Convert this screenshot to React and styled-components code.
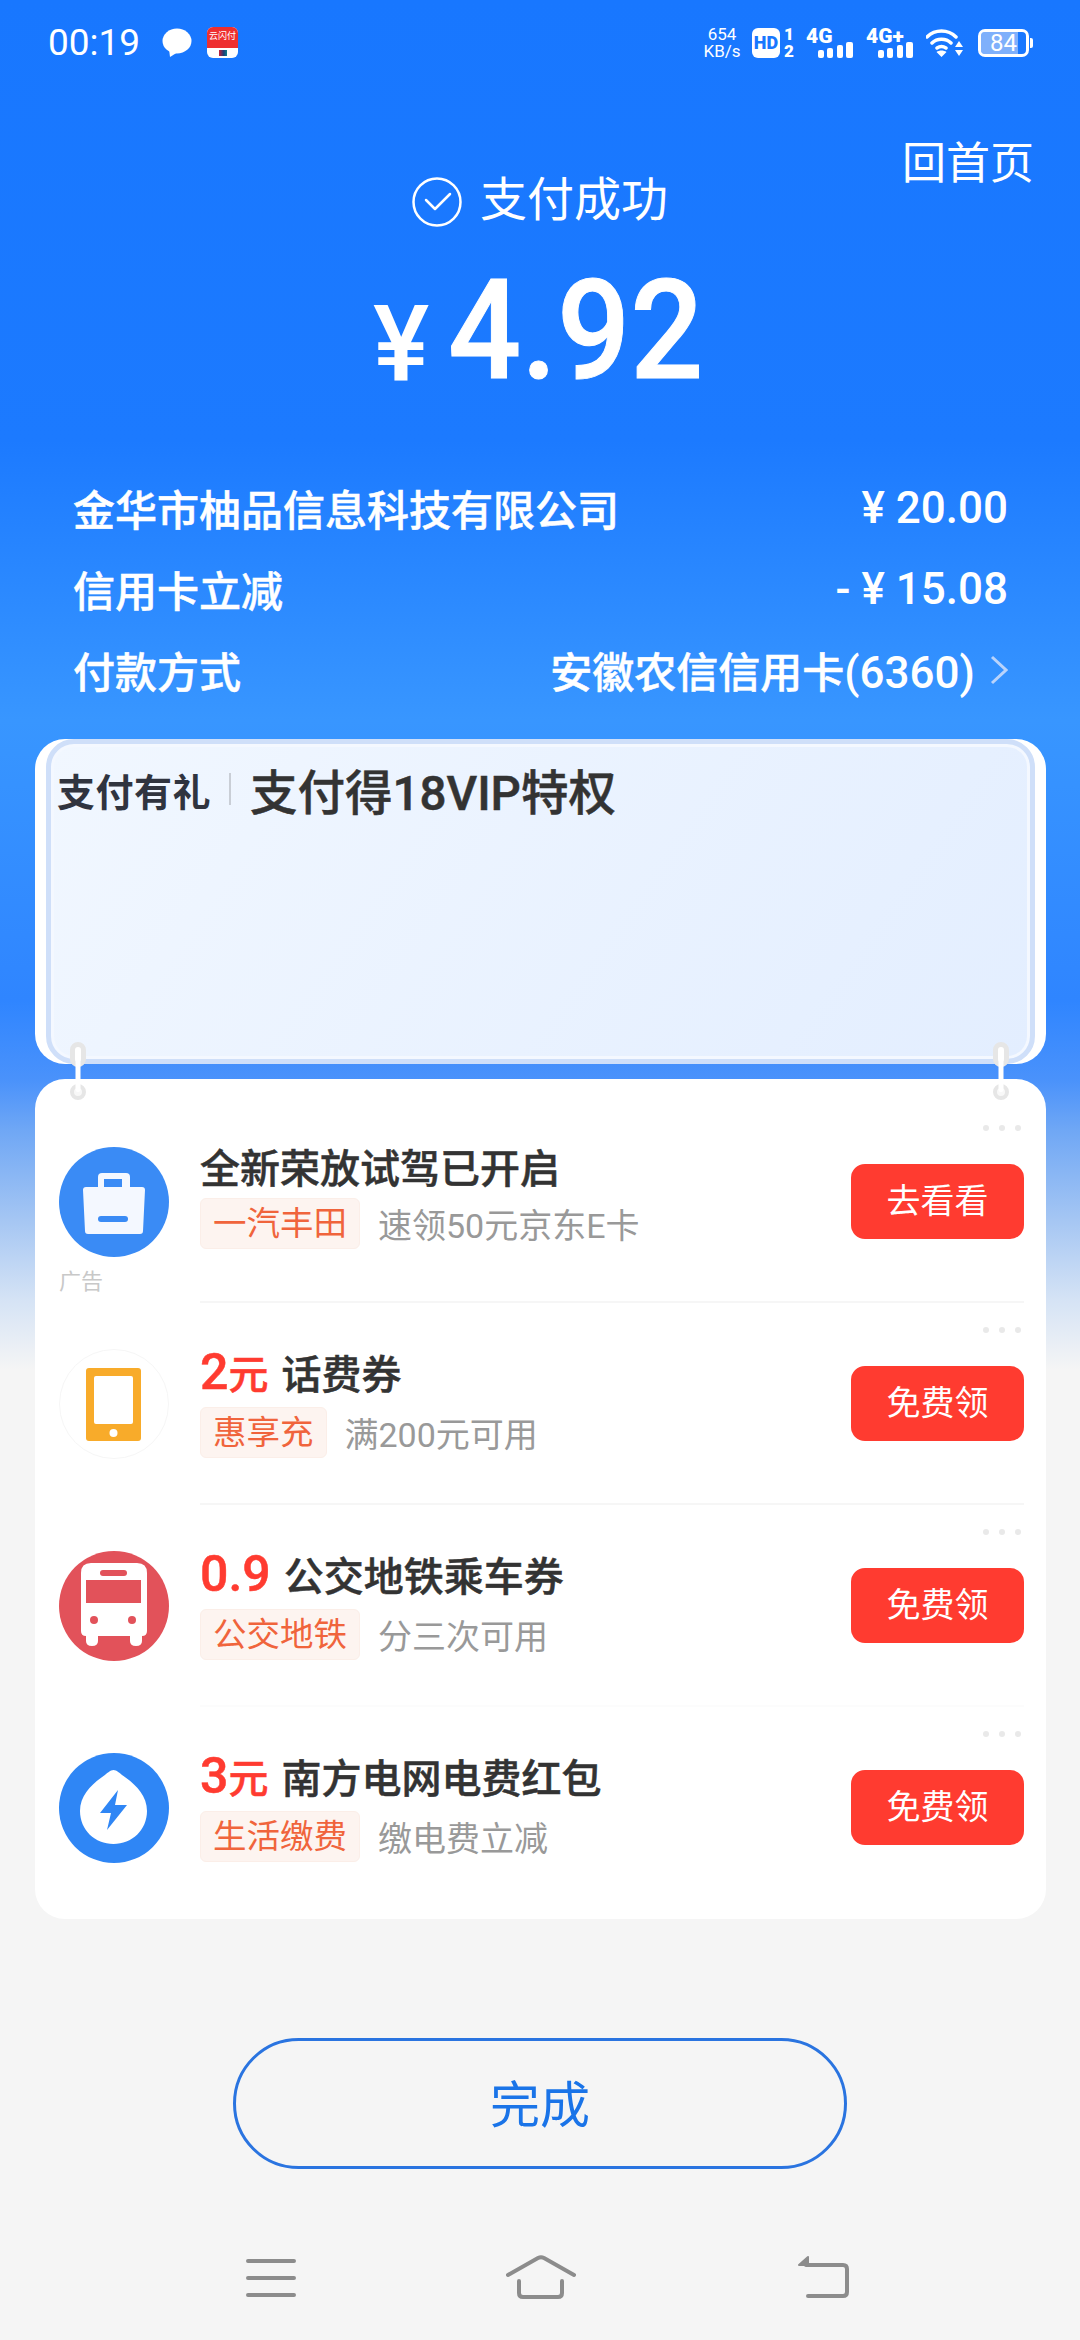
import React from 'react'
import styled, { createGlobalStyle } from 'styled-components'

const FONT = '"Roboto", "Noto Sans CJK SC", sans-serif'

const Global = createGlobalStyle`
  html, body { margin: 0; padding: 0; background: #f5f5f5; }
  * { box-sizing: border-box; }
`

const Page = styled.div`
  width: 1080px;
  height: 2340px;
  overflow: hidden;
  font-family: ${FONT};
  color: #fff;
  background: linear-gradient(180deg, #1877ff 0, #1c7aff 440px, #3896ff 720px, #2f85ff 1000px, #4a92fb 1080px, #6fa7f5 1130px, #a5c6f3 1220px, #d5e3f5 1300px, #f5f5f5 1370px);
`

/* status bar */
const StatusBar = styled.div`
  height: 80px;
  display: flex;
  align-items: center;
  justify-content: space-between;
  padding: 5px 51px 0 48px;
`
const StatusGroup = styled.div`
  display: flex;
  align-items: center;
`
const Clock = styled.span`
  font-size: 37px;
  line-height: 40px;
  width: 114px;
`
const AppIcon = styled.div`
  width: 31px;
  height: 31px;
  margin-left: 15px;
  border-radius: 6px;
  overflow: hidden;
  background: #fff;
  display: flex;
  flex-direction: column;
  align-items: center;
`
const AppIconTop = styled.div`
  width: 100%;
  height: 21px;
  background: #ee2f2f;
  font-size: 9px;
  line-height: 18px;
  text-align: center;
  white-space: nowrap;
`
const AppIconMark = styled.div`
  width: 8px;
  height: 6px;
  margin-top: 2px;
  background: linear-gradient(90deg, #c8203a, #1a3f7a 60%, #0e7f8a);
`
const Speed = styled.div`
  width: 38px;
  font-size: 17px;
  line-height: 17px;
  text-align: center;
  white-space: nowrap;
`
const HdBadge = styled.div`
  width: 28px;
  height: 30px;
  margin-left: 11px;
  background: #fff;
  border-radius: 6px;
  color: #1877ff;
  font-size: 18px;
  font-weight: 900;
  line-height: 30px;
  text-align: center;
`
const SimNumbers = styled.div`
  width: 14px;
  padding-left: 4px;
  font-size: 17px;
  font-weight: 900;
  line-height: 17px;
  text-align: center;
`
const Signal = styled.div`
  position: relative;
  width: ${p => p.$w}px;
  height: 30px;
  margin-left: ${p => p.$ml}px;
`
const SignalLabel = styled.span`
  position: absolute;
  left: 0;
  top: -4px;
  font-size: 21px;
  line-height: 24px;
  font-weight: 900;
`
const SignalBars = styled.svg`
  position: absolute;
  right: 0;
  bottom: 0;
`
const Wifi = styled.svg`
  margin-left: 13px;
`
const Battery = styled.div`
  position: relative;
  width: 51px;
  height: 28px;
  margin-left: 15px;
  border: 3px solid #fff;
  border-radius: 7px;
  color: #fff;
  font-size: 24px;
  line-height: 22px;
  text-align: center;
  background: linear-gradient(90deg, #7fb0fb 0, #7fb0fb 82%, transparent 82%);
  background-origin: content-box;
  background-clip: content-box;
`
const BatteryNub = styled.div`
  position: absolute;
  right: -7px;
  top: 6px;
  width: 3px;
  height: 10px;
  border-radius: 0 2px 2px 0;
  background: #fff;
`

/* header */
const TopRow = styled.div`
  display: grid;
  grid-template-columns: 1fr auto 1fr;
  height: 100px;
  margin-top: 54px;
`
const HomeLink = styled.div`
  grid-column: 3;
  grid-row: 1;
  justify-self: end;
  padding-right: 46px;
  font-size: 44px;
  line-height: 60px;
`
const PayStatus = styled.div`
  grid-column: 2;
  grid-row: 1;
  align-self: end;
  display: flex;
  align-items: center;
  gap: 18px;
  font-size: 47px;
  line-height: 60px;
`
const PayStatusText = styled.span`
  padding-bottom: 4px;
`
const Amount = styled.div`
  display: flex;
  align-items: baseline;
  height: 120px;
  margin-top: 36px;
  padding-left: 373px;
`
const Yen = styled.span`
  font-size: 106px;
  line-height: 120px;
  font-weight: 500;
  transform: translateY(3px);
`
const AmountValue = styled.span`
  margin-left: 19px;
  font-size: 140px;
  line-height: 120px;
  font-weight: 500;
  -webkit-text-stroke: 1px #fff;
  transform: scaleX(0.92);
  transform-origin: left center;
`

/* info rows */
const InfoList = styled.div`
  margin-top: 77px;
  padding: 0 72px 0 73px;
`
const InfoRow = styled.div`
  display: flex;
  justify-content: space-between;
  align-items: center;
  height: 81px;
  font-size: 42px;
  font-weight: 500;
  -webkit-text-stroke: 0.5px #fff;
`
const InfoValue = styled.span`
  display: flex;
  align-items: center;
  gap: 15px;
  font-size: 44px;
  -webkit-text-stroke: 0;
`
const InfoCjk = styled.span`
  font-size: 42px;
  -webkit-text-stroke: 0.5px #fff;
`

/* promo + list */
const Cards = styled.div`
  position: relative;
  margin: 29px 34px 0 35px;
`
const Promo = styled.div`
  height: 325px;
  padding: 0 11px;
  border-radius: 30px;
  background: #fff;
`
const PromoInner = styled.div`
  height: 100%;
  padding: 20px 6px 0;
  border: 5px solid #cfdff9;
  border-radius: 28px;
  box-shadow: inset 0 0 0 3px #f4f8ff;
  background: linear-gradient(125deg, #f1f7ff, #e3eeff);
  color: #333;
`
const PromoHead = styled.div`
  display: flex;
  align-items: center;
  height: 50px;
`
const PromoBrand = styled.span`
  font-size: 38px;
  font-weight: 700;
  color: #30343f;
  letter-spacing: 0.5px;
`
const PromoDivider = styled.span`
  width: 2px;
  height: 32px;
  margin: 0 19px 0 18px;
  background: #c9ced6;
`
const PromoTitle = styled.span`
  font-size: 47.5px;
  font-weight: 500;
  color: #333;
  white-space: nowrap;
  -webkit-text-stroke: 0.5px #333;
`
const Hook = styled.svg`
  position: absolute;
  top: 303px;
  ${p => (p.$right ? 'right: 37px;' : 'left: 35px;')}
`
const ListCard = styled.div`
  height: 840px;
  margin-top: 15px;
  padding-top: 22px;
  border-radius: 30px;
  background: #fff;
`
const Row = styled.div`
  display: flex;
  align-items: center;
  height: 202px;
  padding-left: 24px;
`
const IconWrap = styled.div`
  position: relative;
  width: 110px;
  height: 110px;
  flex: none;
`
const AdLabel = styled.span`
  position: absolute;
  left: 0;
  top: 122px;
  font-size: 22px;
  line-height: 26px;
  color: #c8c8c8;
`
const RowBody = styled.div`
  position: relative;
  flex: 1;
  height: 100%;
  margin: 0 22px 0 31px;
  display: flex;
  align-items: center;
  justify-content: space-between;
  border-bottom: 2px solid ${p => p.$line};
`
const Dots = styled.div`
  position: absolute;
  top: 24px;
  right: 3px;
  display: flex;
  gap: 10px;
`
const Dot = styled.i`
  width: 6px;
  height: 6px;
  background: #e9e9e9;
  border-radius: 50%;
`
const TextBlock = styled.div`
  display: flex;
  flex-direction: column;
  gap: ${p => (p.$coupon ? 11 : 4)}px;
  padding-bottom: ${p => (p.$coupon ? 0 : 7)}px;
`
const Title = styled.div`
  display: flex;
  align-items: baseline;
  height: 48px;
  font-size: 40px;
  line-height: 48px;
  font-weight: 500;
  color: #333;
  -webkit-text-stroke: 0.5px #333;
`
const Price = styled.span`
  color: #ff3b30;
  font-weight: 500;
  margin-right: 13px;
  -webkit-text-stroke: 0.5px #ff3b30;
`
const PriceNumber = styled.span`
  font-size: 50px;
`
const PriceUnit = styled.span`
  font-size: 40px;
`
const SubLine = styled.div`
  display: flex;
  align-items: center;
  height: 51px;
`
const Tag = styled.span`
  height: 51px;
  padding: 0 12px;
  font-size: 33.5px;
  line-height: 49px;
  color: #f0643c;
  background: #fdf4f0;
  border: 1px solid #fbeee8;
  border-radius: 6px;
`
const SubText = styled.span`
  margin-left: 18px;
  font-size: 34px;
  color: #999;
`
const ActionButton = styled.div`
  width: 173px;
  height: 75px;
  border-radius: 14px;
  background: #ff3b30;
  color: #fff;
  font-size: 34px;
  line-height: 75px;
  text-align: center;
`

/* bottom */
const DoneButton = styled.div`
  width: 614px;
  height: 131px;
  margin: 119px 0 0 233px;
  border: 3px solid #2a74e0;
  border-radius: 66px;
  color: #1a74e8;
  font-size: 50px;
  line-height: 130px;
  text-align: center;
`
const NavBar = styled.div`
  display: grid;
  grid-template-columns: 260px 292px 51px;
  align-items: start;
  margin-top: 86px;
  padding-left: 246px;
`

const BagIcon = () => (
  <svg width="110" height="110" viewBox="0 0 110 110">
    <circle cx="55" cy="55" r="55" fill="#3a8bf5" />
    <path d="M39 40V30q0-4 4-4h24q4 0 4 4v10" fill="#f4f8ff" />
    <rect x="45" y="32" width="18" height="9" fill="#3a8bf5" />
    <path d="M27 40h56q3 0 3 3l-2 41q0 3-3 3H29q-3 0-3-3l-2-41q0-3 3-3z" fill="#f4f8ff" />
    <rect x="39" y="69" width="30" height="6" rx="3" fill="#3a8bf5" />
  </svg>
)

const TabletIcon = () => (
  <svg width="110" height="110" viewBox="0 0 110 110">
    <circle cx="55" cy="55" r="54.5" fill="#fff" stroke="#f6f6f6" />
    <rect x="27" y="19" width="55" height="73" rx="3" fill="#f8ab2a" />
    <rect x="35" y="27" width="39" height="48" rx="2" fill="#fff" />
    <circle cx="54.5" cy="84" r="4" fill="#fff" />
  </svg>
)

const BusIcon = () => (
  <svg width="110" height="110" viewBox="0 0 110 110">
    <circle cx="55" cy="55" r="55" fill="#e2525a" />
    <path d="M32 12h46q10 0 10 10v58q0 5-5 5v5q0 5-6 5t-6-5v-5H39v5q0 5-6 5t-6-5v-5q-5 0-5-5V22q0-10 10-10z" fill="#fff" />
    <rect x="41" y="19" width="27" height="6" rx="3" fill="#e2525a" />
    <rect x="27" y="29" width="55" height="23" fill="#e2525a" />
    <circle cx="35" cy="69" r="4" fill="#e2525a" />
    <circle cx="73" cy="69" r="4" fill="#e2525a" />
  </svg>
)

const PowerIcon = () => (
  <svg width="110" height="110" viewBox="0 0 110 110">
    <circle cx="55" cy="55" r="55" fill="#2f86f5" />
    <path d="M54.500 17c3 0 6 3 10 6C76 31 88 42 88 58c0 19-15 33-33.500 33S21 77 21 58c0-16 12-27 23.500-35 4-3 7-6 10-6z" fill="#fff" />
    <path d="M59 37L41 60h11l-4 17 20-25H56z" fill="#2f86f5" />
  </svg>
)

const ICONS = { bag: BagIcon, tablet: TabletIcon, bus: BusIcon, power: PowerIcon }

const ROWS = [
  { icon: 'bag', title: '全新荣放试驾已开启', tag: '一汽丰田', sub: '速领50元京东E卡', action: '去看看', ad: true, line: '#f6f6f6' },
  { icon: 'tablet', num: '2', unit: '元', title: '话费券', tag: '惠享充', sub: '满200元可用', action: '免费领', line: '#f6f6f6' },
  { icon: 'bus', num: '0.9', title: '公交地铁乘车券', tag: '公交地铁', sub: '分三次可用', action: '免费领', line: '#fcfcfc' },
  { icon: 'power', num: '3', unit: '元', title: '南方电网电费红包', tag: '生活缴费', sub: '缴电费立减', action: '免费领', line: 'transparent' },
]

const Bars = () => (
  <SignalBars width="35" height="16" viewBox="0 0 35 16" fill="#fff">
    <rect x="0" y="8" width="6" height="8" rx="2" />
    <rect x="9" y="6" width="6" height="10" rx="2" />
    <rect x="19" y="3" width="6" height="13" rx="2" />
    <rect x="28" y="0" width="7" height="16" rx="2" />
  </SignalBars>
)

const HookShape = ({ right }) => (
  <Hook $right={right} width="16" height="58" viewBox="0 0 16 58">
    <rect x="2.500" y="2.500" width="11" height="20" rx="5.500" fill="#fff" stroke="#e6e6e6" strokeWidth="5" />
    <circle cx="8" cy="50" r="6" fill="#f8f8f8" stroke="#e6e6e6" strokeWidth="4" />
    <rect x="5.500" y="8" width="5" height="42" rx="2.500" fill="#fff" />
  </Hook>
)

const App = () => {
  return (
    <Page>
      <Global />
      <StatusBar>
        <StatusGroup>
          <Clock>00:19</Clock>
          <svg width="30" height="30" viewBox="0 0 30 30">
            <ellipse cx="15" cy="13" rx="14.500" ry="12.500" fill="#fff" />
            <path d="M7 21l1 8 8-5z" fill="#fff" />
          </svg>
          <AppIcon>
            <AppIconTop>云闪付</AppIconTop>
            <AppIconMark />
          </AppIcon>
        </StatusGroup>
        <StatusGroup>
          <Speed>654<br />KB/s</Speed>
          <HdBadge>HD</HdBadge>
          <SimNumbers>1<br />2</SimNumbers>
          <Signal $w={47} $ml={12}>
            <SignalLabel>4G</SignalLabel>
            <Bars />
          </Signal>
          <Signal $w={47} $ml={13}>
            <SignalLabel>4G+</SignalLabel>
            <Bars />
          </Signal>
          <Wifi width="37" height="30" viewBox="0 0 37 30">
            <path d="M1 9C9 1 22 1 30 9M6 15c5-5 14-5 19 0M11 20c3-2 6-2 9 0" fill="none" stroke="#fff" strokeWidth="3.500" strokeLinecap="round" />
            <path d="M15.500 29l-5-5c3-2 7-2 10 0zM33 13l4 6h-8zM33 28l-4-6h8z" fill="#fff" />
          </Wifi>
          <Battery>84<BatteryNub /></Battery>
        </StatusGroup>
      </StatusBar>

      <TopRow>
        <PayStatus>
          <svg width="50" height="50" viewBox="0 0 50 50" fill="none" stroke="#fff">
            <circle cx="25" cy="25" r="23.500" strokeWidth="2.500" />
            <path d="M14 23l9 9 15-15" strokeWidth="2.500" strokeLinecap="round" strokeLinejoin="round" />
          </svg>
          <PayStatusText>支付成功</PayStatusText>
        </PayStatus>
        <HomeLink>回首页</HomeLink>
      </TopRow>

      <Amount>
        <Yen>¥</Yen>
        <AmountValue>4.92</AmountValue>
      </Amount>

      <InfoList>
        <InfoRow>
          <span>金华市柚品信息科技有限公司</span>
          <InfoValue>¥ 20.00</InfoValue>
        </InfoRow>
        <InfoRow>
          <span>信用卡立减</span>
          <InfoValue>- ¥ 15.08</InfoValue>
        </InfoRow>
        <InfoRow>
          <span>付款方式</span>
          <InfoValue>
            <span><InfoCjk>安徽农信信用卡</InfoCjk>(6360)</span>
            <svg width="18" height="30" viewBox="0 0 18 30" fill="none">
              <path d="M2 2l14 13L2 28" stroke="#b9d3fb" strokeWidth="3" />
            </svg>
          </InfoValue>
        </InfoRow>
      </InfoList>

      <Cards>
        <Promo>
          <PromoInner>
            <PromoHead>
              <PromoBrand>支付有礼</PromoBrand>
              <PromoDivider />
              <PromoTitle>支付得18VIP特权</PromoTitle>
            </PromoHead>
          </PromoInner>
        </Promo>
        <HookShape />
        <HookShape right />
        <ListCard>
          {ROWS.map(row => {
            const Icon = ICONS[row.icon]
            return (
              <Row key={row.icon}>
                <IconWrap>
                  <Icon />
                  {row.ad && <AdLabel>广告</AdLabel>}
                </IconWrap>
                <RowBody $line={row.line}>
                  <Dots><Dot /><Dot /><Dot /></Dots>
                  <TextBlock $coupon={!!row.num}>
                    <Title>
                      {row.num && (
                        <Price>
                          <PriceNumber>{row.num}</PriceNumber>
                          {row.unit && <PriceUnit>{row.unit}</PriceUnit>}
                        </Price>
                      )}
                      {row.title}
                    </Title>
                    <SubLine>
                      <Tag>{row.tag}</Tag>
                      <SubText>{row.sub}</SubText>
                    </SubLine>
                  </TextBlock>
                  <ActionButton>{row.action}</ActionButton>
                </RowBody>
              </Row>
            )
          })}
        </ListCard>
      </Cards>

      <DoneButton>完成</DoneButton>

      <NavBar>
        <svg width="50" height="42" viewBox="0 0 50 42" stroke="#8c8c8c" strokeWidth="4" strokeLinecap="round">
          <path d="M2 6h46M2 23h46M2 40h46" />
        </svg>
        <svg width="70" height="44" viewBox="0 0 70 44" fill="none" stroke="#8c8c8c" strokeWidth="4" strokeLinecap="round" strokeLinejoin="round">
          <path d="M2 20L32 3q3-1.500 6 0l30 17" />
          <path d="M13 26v12q0 4 4 4h35q4 0 4-4V26" />
        </svg>
        <svg width="51" height="44" viewBox="0 0 51 44" fill="none" stroke="#8c8c8c" strokeWidth="4" strokeLinecap="round" strokeLinejoin="round">
          <path d="M8 10h37q4 0 4 4v23q0 4-4 4H10" />
          <path d="M1 10l9-8v8z" fill="#8c8c8c" strokeWidth="2" />
        </svg>
      </NavBar>
    </Page>
  )
}

export default App
